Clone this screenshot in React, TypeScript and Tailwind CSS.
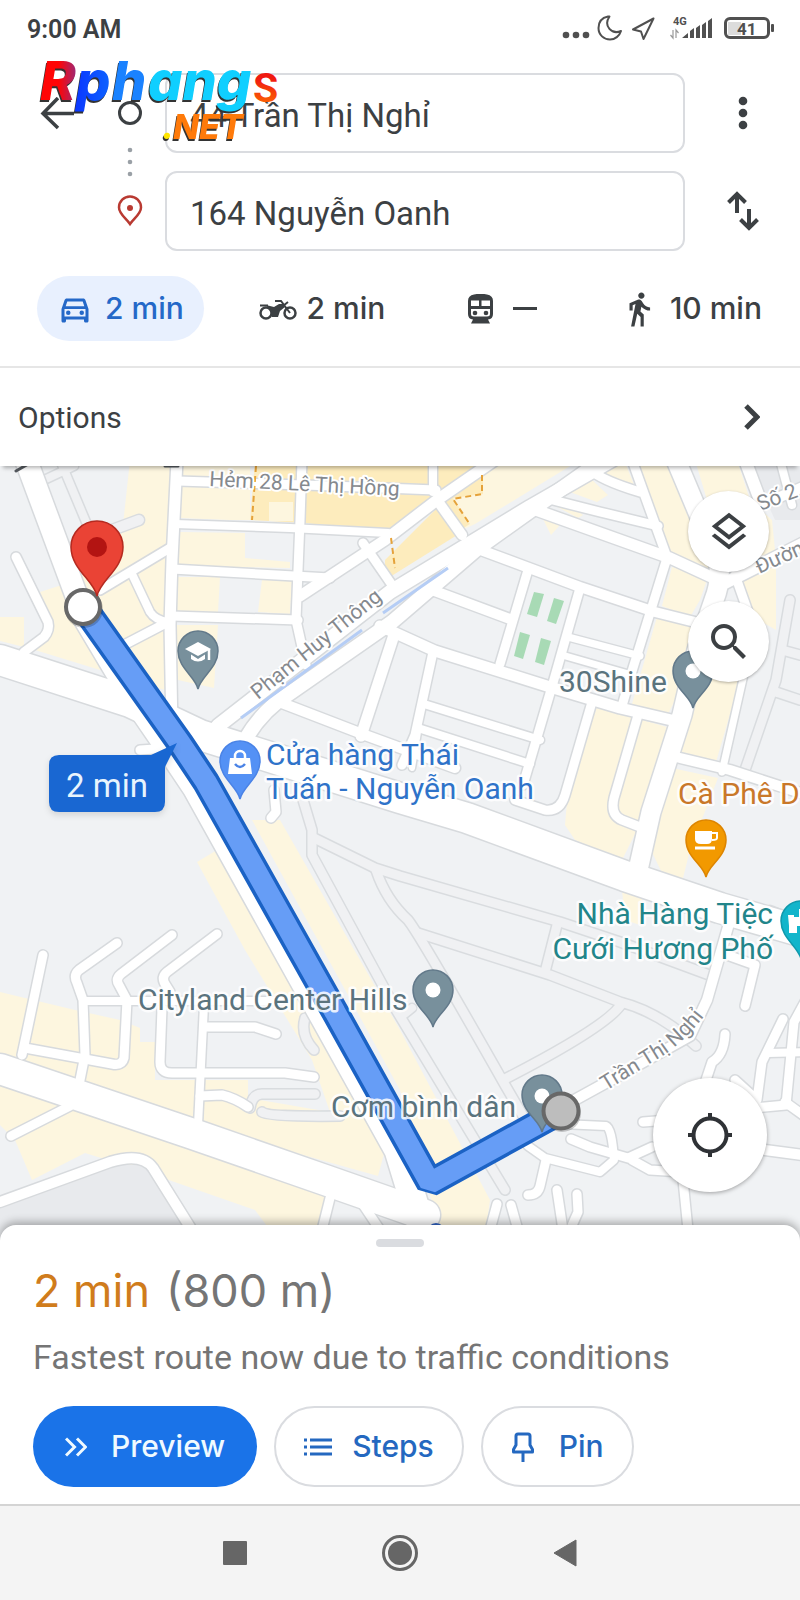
import React from "react";
import {
  MdDirectionsWalk,
  MdOutlineDirectionsCar,
  MdOutlineLayers,
  MdSearch,
} from "react-icons/md";

type Road = [d: string, width: number];

const LAND: [points: string, fill: string][] = [
  ["40,592 52,625 35,650 165,690 165,560 172,460 130,460 123,525 108,560 68,583", "#fdf6df"],
  ["0,617 24,617 24,647 0,641", "#fdf6df"],
  ["180,460 250,460 250,520 230,520 230,487 180,485", "#fdf6df"],
  ["180,485 230,485 230,520 180,518", "#fdf6df"],
  ["180,532 245,533 245,558 290,562 290,568 178,566", "#fdf6df"],
  ["178,577 220,577 218,612 176,612", "#fdf6df"],
  ["262,580 292,580 290,614 258,612", "#fdf6df"],
  ["176,625 218,625 214,688 178,680", "#fdf6df"],
  ["255,460 490,460 437,497 385,532 305,523 250,520", "#fdecbd"],
  ["269,502 293,502 293,521 269,521", "#fdf6df"],
  ["385,560 437,508 462,532 385,580", "#fdecbd"],
  ["437,508 485,460 580,460 475,524 462,530", "#fdf6df"],
  ["440,505 483,475 483,494 453,498 470,524 460,530", "#fdecbd"],
  ["570,492 590,478 608,495 597,502", "#fdf6df"],
  ["596,472 625,462 634,485", "#fdf6df"],
  ["550,503 565,501 583,515 578,518", "#fdf6df"],
  ["543,519 561,524 551,535", "#fdf6df"],
  ["635,460 675,460 730,560 705,575 672,562", "#fdf6df"],
  ["695,460 737,460 750,500 772,520 776,560 776,630 750,615 725,560", "#fdf6df"],
  ["672,567 708,577 700,600 690,617 662,606", "#fdf6df"],
  ["657,617 700,628 700,650 667,716 632,704", "#fdf6df"],
  ["697,672 740,680 716,762 677,752", "#fdf6df"],
  ["597,707 667,727 637,830 622,860 575,840 565,825 568,790", "#fdf6df"],
  ["672,768 718,778 690,850 682,882 662,873 651,850 652,830", "#fdf6df"],
  ["622,890 642,898 640,925 625,920", "#fdf6df"],
  ["252,820 280,820 400,1030 490,1200 486,1230 440,1230 400,1090", "#fdf6df"],
  ["197,862 217,850 385,1150 378,1176 200,1126 0,1064 0,992 75,1010 120,1020 140,1028 140,1042 155,1042 155,1080 248,1080 248,1098 330,1112 312,1060 245,950", "#fdf6df"],
  ["0,1080 65,1105 330,1195 318,1230 270,1230 255,1210 140,1170 85,1153 32,1180 15,1140 0,1125", "#fdf6df"],
  ["0,1205 120,1165 148,1165 196,1250 0,1250", "#e8eaed"],
  ["748,460 800,460 800,520 775,520", "#e8eaed"],
];

const FIELDS = [
  "534,592 544,594 537,617 527,614",
  "554,598 564,601 556,624 547,621",
  "520,632 530,635 523,659 514,656",
  "541,638 551,641 544,665 535,662",
];

const LANES: Road[] = [
  ["M60 460L86 522", 8],
  ["M44 480L74 466", 8],
  ["M112 530L139 520", 10],
  ["M300 790L312 830L312 855L395 1008L505 1190", 9],
  ["M314 838L375 868L400 876L560 922L620 942L712 976", 9],
  ["M376 870Q386 900 408 920Q420 935 505 1085L530 1128", 9],
  ["M418 933L550 975L620 1002Q660 1012 696 1046", 9],
  ["M557 925L545 972", 9],
  ["M622 1003Q610 1025 503 1080", 9],
  ["M402 1016L412 1008", 8],
  ["M305 1018Q300 1035 314 1050", 9],
  ["M250 1108Q252 1094 262 1094L315 1094", 9],
  ["M262 1112Q268 1117 340 1116", 9],
  ["M790 600L776 680L745 770", 9],
  ["M800 655L782 650", 9],
  ["M800 700L776 692", 9],
  ["M770 910L800 922", 8],
];

const ROADS: Road[] = [
  ["M16 557L48 622Q50 630 44 637L24 652", 9],
  ["M177 460L172 560L170 625L172 730", 11],
  ["M178 481L305 485L436 490", 9],
  ["M175 524L290 528L388 533", 8],
  ["M172 569L330 578", 9],
  ["M172 616L298 620", 9],
  ["M302 460L300 520L296 620L306 665", 9],
  ["M100 590L170 548", 9],
  ["M120 647L170 621", 9],
  ["M132 574L150 612Q155 620 168 622", 8],
  ["M300 596L385 540L437 500L495 460", 11],
  ["M363 543L392 585", 9],
  ["M437 500L462 535", 10],
  ["M433 460L433 492", 8],
  ["M140 750L170 748", 9],
  ["M218 726L390 592L530 507L612 460", 14],
  ["M245 740Q262 710 290 693L392 622L477 549L540 504L602 460", 14],
  ["M533 509L670 558L722 582", 11],
  ["M545 498L600 512L658 526", 9],
  ["M588 468Q600 480 640 492", 9],
  ["M632 460L668 560", 9],
  ["M745 460L760 500", 12],
  ["M780 460L792 505", 8],
  ["M745 512L810 484", 10],
  ["M725 583L810 540", 12],
  ["M735 575L758 640", 9],
  ["M745 670L722 772", 7],
  ["M478 549L580 587L655 612L695 622", 10],
  ["M432 590L510 619", 10],
  ["M528 570L500 664", 9],
  ["M580 588L553 683L523 785", 9],
  ["M667 558L650 613L633 668L622 706", 9],
  ["M380 626L435 651L550 687L620 708L680 722", 11],
  ["M433 652L415 735L402 765", 9],
  ["M424 704L540 740", 8],
  ["M418 728L530 764", 8],
  ["M418 732L412 768", 6],
  ["M592 702L565 795Q560 812 545 810L515 800", 9],
  ["M568 637L640 656", 7],
  ["M562 655L632 675", 7],
  ["M638 715L614 798Q610 815 622 820L640 827", 9],
  ["M676 757L730 770L810 796", 10],
  ["M274 700L365 735L455 768", 10],
  ["M393 638L361 736", 11],
  ["M274 790L276 812L271 818", 9],
  ["M560 1108L620 1075L690 1036L707 1000L730 920", 10],
  ["M727 955L755 965L745 1006", 9],
  ["M725 1034Q724 1055 712 1062L706 1080", 9],
  ["M783 1019L762 1062L757 1100L735 1080", 9],
  ["M806 1000L794 1022L786 1105L755 1108", 9],
  ["M768 1053L810 1052", 8],
  ["M785 1102L810 1120", 9],
  ["M765 1150L810 1156", 10],
  ["M643 1122L668 1120", 9],
  ["M562 1124L606 1126Q612 1128 614 1160L600 1172L545 1158L528 1146", 8],
  ["M571 1139L590 1147L628 1158L652 1147", 9],
  ["M632 1160L650 1170L682 1172", 9],
  ["M546 1160L540 1186Q538 1195 528 1195", 9],
  ["M682 1170L688 1230", 9],
  ["M497 1204L490 1230", 9],
  ["M511 1205L518 1230", 9],
  ["M557 1190L563 1230", 9],
  ["M577 1194L578 1212L570 1230", 9],
  ["M43 955L22 1055", 9],
  ["M117 943L79 970Q73 975 77 983L83 1000L85 1055L80 1080", 9],
  ["M172 935L121 974Q115 979 119 985L127 1000L124 1058Q122 1066 112 1064L25 1048", 9],
  ["M217 934L167 972Q161 977 165 984L170 992", 9],
  ["M162 1008L160 1062Q160 1073 172 1073L285 1073L314 1077", 9],
  ["M83 1001L204 1001L280 1001", 8],
  ["M204 1005L198 1125", 8],
  ["M204 1027L255 1027L276 1034", 9],
  ["M200 1096L222 1095Q235 1098 248 1107", 9],
  ["M70 1106L11 1136", 9],
  ["M0 1202L110 1162Q142 1152 153 1168L198 1240", 10],
  ["M330 1198L322 1230", 9],
  ["M360 1200L380 1230", 9],
  ["M676 460L718 560Q722 580 714 600L697 650L682 715L651 812L638 870", 19],
  ["M0 660L130 702L200 735L400 798L467 818L625 876L720 908L810 934", 30],
  ["M0 1069L190 1133L325 1180L425 1215", 30],
  ["M26 460L78 600", 22],
  ["M80 606L130 690L180 763L196 787L324 1017L398 1150L424 1235", 27],
];

const ROUTE = "M90 616L180 743L206 782L335 1012L430 1183L561 1111";

function Pin({ x, y, r, tail, fill, edge, children }: { x: number; y: number; r: number; tail: number; fill: string; edge: string; children?: React.ReactNode }) {
  const d = `M0 ${tail}C${-r * 0.12} ${tail * 0.68} ${-r} ${r * 0.85} ${-r} 0A${r} ${r} 0 1 1 ${r} 0C${r} ${r * 0.85} ${r * 0.12} ${tail * 0.68} 0 ${tail}Z`;
  return (
    <g transform={`translate(${x} ${y})`}>
      <path d={d} fill={fill} stroke={edge} strokeWidth="1.5" />
      {children}
    </g>
  );
}

function MapCanvas() {
  return (
    <svg className="absolute inset-0 size-full" viewBox="0 466 800 775" preserveAspectRatio="xMidYMid slice" role="img" aria-label="Route map">
      <defs>
        <path id="tran-thi-nghi" d="M606 1091L664 1055Q690 1038 716 1000" />
      </defs>
      <rect y="440" width="800" height="820" fill="#f0f2f4" />
      {LAND.map(([points, fill]) => (
        <polygon key={points} points={points} fill={fill} />
      ))}
      {FIELDS.map((points) => (
        <polygon key={points} points={points} fill="#a8dab5" />
      ))}
      <g fill="none" strokeLinecap="round" strokeLinejoin="round">
        {LANES.map(([d, w]) => (
          <path key={d} d={d} strokeWidth={w + 3} stroke="#d9dcdf" />
        ))}
        {LANES.map(([d, w]) => (
          <path key={d} d={d} strokeWidth={w} stroke="#f0f1f3" />
        ))}
        {ROADS.map(([d, w]) => (
          <path key={d} d={d} strokeWidth={w + 3} stroke="#d7dadd" />
        ))}
        {ROADS.map(([d, w]) => (
          <path key={d} d={d} strokeWidth={w} stroke="#ffffff" />
        ))}
        <path d="M241 718L362 630M383 613L448 568" stroke="#b5cdf5" strokeWidth="3" strokeLinecap="butt" />
        <path d="M256 466L252 520M391 538L395 568M482 475L482 494L453 499L469 523" stroke="#e5a23a" strokeWidth="2" strokeDasharray="6 4" strokeLinecap="butt" />
        <path d="M16 471L30 463M165 466L178 466" stroke="#555a5f" strokeWidth="3" />
      </g>

      <g fill="#85898e" stroke="#ffffff" strokeWidth="4" strokeLinejoin="round" paintOrder="stroke" fontSize="21">
        <text transform="translate(209 486) rotate(3)">Hẻm 28 Lê Thị Hồng</text>
        <text transform="translate(258 700) rotate(-39)">Phạm Huy Thông</text>
        <text>
          <textPath href="#tran-thi-nghi">Trần Thị Nghỉ</textPath>
        </text>
        <text transform="translate(760 511) rotate(-20)">Số 2</text>
        <text transform="translate(759 574) rotate(-24)">Đường</text>
      </g>

      <Pin x={433} y={990} r={20} tail={37} fill="#78909c" edge="#62798a">
        <circle r="7.5" fill="#fff" />
      </Pin>

      <g fill="none" strokeLinejoin="bevel">
        <path d={ROUTE} stroke="#1b62c4" strokeWidth="28" />
        <path d={ROUTE} stroke="#669df6" strokeWidth="21" />
      </g>

      <Pin x={542} y={1095} r={20} tail={37} fill="#78909c" edge="#62798a">
        <circle cy="1" r="7.5" fill="#fff" />
      </Pin>
      <circle cx="562" cy="1113" r="19" fill="#000" opacity=".2" />
      <circle cx="561" cy="1111" r="17.5" fill="#bdbdbd" stroke="#686868" strokeWidth="4" />

      <circle cx="84" cy="609" r="19" fill="#000" opacity=".2" />
      <circle cx="83" cy="607" r="17" fill="#fff" stroke="#686868" strokeWidth="4" />
      <Pin x={97} y={547} r={26} tail={49} fill="#ea4335" edge="#b52a20">
        <circle r="10" fill="#b31412" />
      </Pin>

      <Pin x={198} y={651} r={20} tail={38} fill="#78909c" edge="#62798a">
        <path d="M-13 -2L0 -9L13 -2L0 5Z" fill="#fff" />
        <path d="M-7 3.500V8Q0 13 7 8V3.500L0 8Z" fill="#fff" />
        <path d="M11 -2V9" stroke="#fff" strokeWidth="2.500" />
      </Pin>
      <Pin x={240} y={761} r={20} tail={38} fill="#5491f5" edge="#4a83e6">
        <path d="M-10 -3H10L12 13H-12Z" fill="#fff" />
        <path d="M-5 -3V-5A5 5 0 0 1 5 -5V-3" fill="none" stroke="#fff" strokeWidth="2.500" />
        <path d="M-5 3Q0 9 5 3" fill="none" stroke="#4a83e6" strokeWidth="2.500" />
      </Pin>
      <Pin x={693} y={671} r={20} tail={37} fill="#78909c" edge="#62798a">
        <circle r="7.5" fill="#fff" />
      </Pin>
      <Pin x={706} y={840} r={20} tail={37} fill="#f29900" edge="#dd8500">
        <path d="M-11 -9H6V-1Q6 4 1 4H-5Q-11 4 -11 -1Z" fill="#fff" />
        <path d="M6 -7H11V-2Q11 0 6 0" fill="none" stroke="#fff" strokeWidth="2" />
        <path d="M-11 8H9" stroke="#fff" strokeWidth="3" />
      </Pin>
      <Pin x={801} y={921} r={20} tail={38} fill="#12b5cb" edge="#1099ac">
        <path d="M-13 -6H-7V-4H-2V-12H4V-4H10V-6H13V5H11V12H-12V5Z" fill="#fff" />
        <path d="M-4 12V5H4V12Z" fill="#12b5cb" />
      </Pin>

      <path d="M59 755H151L177 743L165 767V802Q165 812 155 812H59Q49 812 49 802V765Q49 755 59 755Z" fill="#1967d2" className="drop-shadow-md" />
      <text x="66" y="797" fontSize="33" fill="#e8f4fd">2 min</text>

      <g stroke="#ffffff" strokeWidth="5" strokeOpacity=".85" strokeLinejoin="round" paintOrder="stroke" fontSize="30">
        <g fill="#2f73c9">
          <text x="266" y="765">Cửa hàng Thái</text>
          <text x="266" y="799">Tuấn - Nguyễn Oanh</text>
        </g>
        <g fill="#5a737d">
          <text x="559" y="692">30Shine</text>
          <text x="138" y="1010">Cityland Center Hills</text>
          <text x="331" y="1117">Cơm bình dân</text>
        </g>
        <g fill="#22858a" textAnchor="end">
          <text x="773" y="924">Nhà Hàng Tiệc</text>
          <text x="773" y="959">Cưới Hương Phố</text>
        </g>
        <text x="678" y="804" fill="#c9782a">Cà Phê D</text>
      </g>
      <circle cx="436" cy="1232" r="9" fill="#3367c8" />
    </svg>
  );
}

function StatusIcons() {
  return (
    <svg className="h-8 w-[216px]" viewBox="560 12 216 32" fill="#505050" role="img" aria-label="Battery 41 percent, 4G">
      <circle cx="566" cy="35" r="3.3" />
      <circle cx="576" cy="35" r="3.3" />
      <circle cx="586" cy="35" r="3.3" />
      <path d="M608 16.500C601 18 598.500 23 598.500 28C598.500 35 604 39.500 610 39.500C615 39.500 619.500 36 621 31C612 35 603 26 609.500 16.500Z" fill="none" stroke="#505050" strokeWidth="2" strokeLinejoin="round" />
      <path d="M653.500 18.500L633 29.500L641 31.500L643.500 39Z" fill="none" stroke="#505050" strokeWidth="2" strokeLinejoin="round" />
      <text x="673" y="24.500" fontSize="11" fontWeight="700">4G</text>
      <path d="M673 30V38L670.500 35M676 38V30L678.500 33" fill="none" stroke="#999" strokeWidth="1.200" />
      <path d="M682 38L688 33V38ZM690 38V31L694 28V38ZM696 38V28L700 25V38ZM702 38V25L706 22V38ZM708 38V21L712 18V38Z" />
      <rect x="728" y="22" width="13" height="13" fill="#dcdcdc" />
      <rect x="725.500" y="18.500" width="43" height="19" rx="4.500" fill="none" stroke="#505050" strokeWidth="3" />
      <rect x="771" y="24" width="3" height="8" rx="1" />
      <text x="737" y="34.500" fontSize="17" fontWeight="700">41</text>
    </svg>
  );
}

function Watermark() {
  return (
    <svg className="pointer-events-none absolute left-9 top-[54px] z-20 h-24 w-[260px]" viewBox="36 54 260 96" role="img" aria-label="Rphangs.NET">
      <defs>
        <linearGradient id="logo-r">
          <stop offset=".5" stopColor="#ff0505" />
          <stop offset="1" stopColor="#9a2a7a" />
        </linearGradient>
        <linearGradient id="logo-p">
          <stop offset="0" stopColor="#0a35ff" />
          <stop offset="1" stopColor="#0d63ff" />
        </linearGradient>
        <linearGradient id="logo-s" x2="0" y2="1">
          <stop offset=".3" stopColor="#f01a10" />
          <stop offset="1" stopColor="#ff7a00" />
        </linearGradient>
      </defs>
      <g className="font-[Inter] font-extrabold italic [filter:drop-shadow(-1px_2px_0_#333)]">
        <text x="40" y="100" fontSize="54" fill="url(#logo-r)">R</text>
        <text x="76" y="100" fontSize="54" fill="url(#logo-p)">p</text>
        <text x="112" y="100" fontSize="54" fill="#1a82ff">h</text>
        <text x="148" y="100" fontSize="54" fill="#10cfff">
          ang
        </text>
        <text x="162" y="139" fontSize="34" fill="#ffe500">.</text>
        <text x="173" y="139" fontSize="34" fill="#ff7a0a">NET</text>
      </g>
      <text x="253" y="102" fontSize="41" fontWeight="700" fill="url(#logo-s)">S</text>
    </svg>
  );
}

function MotorcycleIcon() {
  return (
    <svg className="h-6 w-[38px]" viewBox="0 0 38 24" aria-hidden="true">
      <g fill="none" stroke="currentColor">
        <circle cx="7" cy="16" r="5.500" strokeWidth="2.500" />
        <circle cx="31" cy="16" r="5.500" strokeWidth="2.500" />
        <path d="M1 8.500H9M16 4H22L31 16M24 9L29 5" strokeWidth="2" />
      </g>
      <path d="M7 8L15 10L20 7H24L26 10L21 14L19 20H13L12 15Z" fill="currentColor" />
    </svg>
  );
}

function TrainIcon() {
  return (
    <svg className="h-[30px] w-[25px]" viewBox="0 0 25 30" fill="currentColor" fillRule="evenodd" aria-hidden="true">
      <path d="M6 0.500Q12.500 -1 19 0.500Q25 1.500 25 7V20Q25 25 20 25.500L22 29.500H3L5 25.500Q0 25 0 20V7Q0 1.500 6 0.500ZM3 6.500V12H11V6.500ZM13.500 6.500V12H22V6.500ZM3 15V20Q3 22.500 6 22.500H19Q22 22.500 22 20V15Z" />
      <circle cx="7" cy="19" r="2.300" />
      <circle cx="18" cy="19" r="2.300" />
    </svg>
  );
}

const TAB = "flex h-[65px] items-center rounded-full text-[30px] font-medium";

export default function App() {
  return (
    <div className="relative flex min-h-screen flex-col bg-white font-[Roboto,sans-serif] text-[#3c4043]">
      <div className="flex h-14 items-center justify-between pl-[27px] pr-6">
        <span className="pt-1 text-[25px] font-semibold">9:00 AM</span>
        <StatusIcons />
      </div>

      <header className="relative z-10 shadow-[0_5px_4px_-3px_rgba(0,0,0,0.3)]">
        <div className="flex pt-[17px]">
          <div className="flex w-[104px] pl-10 pt-6">
            <button type="button" aria-label="Back" className="size-9">
              <svg viewBox="0 0 36 36" className="size-9" fill="none" stroke="currentColor" strokeWidth="3.500">
                <path d="M34 16.500H3M18 1L3 16.500L18 31" />
              </svg>
            </button>
          </div>
          <svg className="h-[178px] w-[52px]" viewBox="0 0 52 178" fill="none" aria-hidden="true">
            <circle cx="26" cy="40" r="10.500" stroke="#3c4043" strokeWidth="3" />
            <g fill="#9aa0a6">
              <circle cx="26" cy="77" r="2.300" />
              <circle cx="26" cy="89" r="2.300" />
              <circle cx="26" cy="101" r="2.300" />
            </g>
            <path d="M26 151C22 145 15 141 15 134.500A11 11 0 0 1 37 134.500C37 141 30 145 26 151Z" stroke="#b93a32" strokeWidth="2.500" />
            <circle cx="26" cy="135" r="3" fill="#b93a32" />
          </svg>
          <div className="ml-[9px] flex min-w-0 flex-1 flex-col gap-[18px]">
            <input aria-label="Starting point" defaultValue="44 Trần Thị Nghỉ" className="h-20 w-full rounded-xl border-2 border-[#dadce0] bg-white px-[23px] pt-1 text-[33px] outline-none" />
            <input aria-label="Destination" defaultValue="164 Nguyễn Oanh" className="h-20 w-full rounded-xl border-2 border-[#dadce0] bg-white px-[23px] pt-1 text-[33px] outline-none" />
          </div>
          <div className="flex w-[115px] flex-col items-center gap-[18px]">
            <button type="button" aria-label="More" className="flex h-20 w-12 items-center justify-center">
              <svg viewBox="0 0 10 34" className="h-[34px] w-[10px]" fill="currentColor">
                <circle cx="5" cy="5" r="4.300" />
                <circle cx="5" cy="17" r="4.300" />
                <circle cx="5" cy="29" r="4.300" />
              </svg>
            </button>
            <button type="button" aria-label="Swap start and destination" className="flex h-20 w-12 items-center justify-center">
              <svg viewBox="0 0 32 40" className="h-10 w-8" fill="none" stroke="currentColor" strokeWidth="4">
                <path d="M10 22V3M1.500 11.500L10 3L18.500 11.500M22 18V37M13.500 28.500L22 37L30.500 28.500" />
              </svg>
            </button>
          </div>
        </div>

        <nav aria-label="Travel mode" className="mt-[25px] flex justify-between border-b-2 border-[#e6e6e6] pb-[25px] pl-[37px] pr-[18px] font-[Inter,sans-serif]">
          <button type="button" className={`${TAB} gap-3 bg-[#e8f0fe] px-5 text-[#2468c8]`}>
            <MdOutlineDirectionsCar size={36} />
            2 min
          </button>
          <button type="button" className={`${TAB} gap-2.5 px-5`}>
            <MotorcycleIcon />
            2 min
          </button>
          <button type="button" className={`${TAB} gap-5 px-7`} aria-label="Transit, unavailable">
            <TrainIcon />
            <span className="h-[3px] w-6 bg-current" />
          </button>
          <button type="button" className={`${TAB} gap-3 px-5`}>
            <MdDirectionsWalk size={38} />
            10 min
          </button>
        </nav>

        <button type="button" className="flex h-[98px] w-full items-center justify-between bg-white pl-[18px] pr-10 text-[30px]">
          Options
          <svg viewBox="0 0 16 26" className="h-[26px] w-4" fill="none" stroke="currentColor" strokeWidth="5">
            <path d="M2 2L13 13L2 24" />
          </svg>
        </button>
      </header>

      <main className="relative min-h-[500px] flex-1 overflow-hidden">
        <MapCanvas />
        <button type="button" aria-label="Map layers" className="absolute right-[31px] top-[25px] flex size-[81px] items-center justify-center rounded-full bg-white shadow-[0_1px_3px_rgba(0,0,0,0.3)]">
          <MdOutlineLayers size={46} />
        </button>
        <button type="button" aria-label="Search along route" className="absolute right-[31px] top-[135px] flex size-[81px] items-center justify-center rounded-full bg-white shadow-[0_1px_3px_rgba(0,0,0,0.3)]">
          <MdSearch size={48} />
        </button>
        <button type="button" aria-label="Your location" className="absolute bottom-[49px] right-[33px] flex size-[114px] items-center justify-center rounded-full bg-white shadow-[0_1px_4px_rgba(0,0,0,0.35)]">
          <svg viewBox="0 0 46 46" className="size-[46px]" fill="none" stroke="#2f3236" strokeWidth="4">
            <circle cx="23" cy="23" r="16.500" />
            <path d="M23 1V8M23 38V45M1 23H8M38 23H45" />
          </svg>
        </button>
      </main>

      <section aria-label="Route summary" className="relative z-10 -mt-4 rounded-t-2xl bg-white px-[33px] pb-[17px] pt-[14px] shadow-[0_-3px_8px_rgba(0,0,0,0.3)]">
        <div className="mx-auto h-2 w-12 rounded-full bg-[#dadce0]" />
        <h1 className="mt-[18px] flex gap-4 font-[Inter,sans-serif] text-[45px] leading-[52px] text-[#757575]">
          <span className="text-[#d07c1c]">2 min</span>
          <span>(800 m)</span>
        </h1>
        <p className="mt-5 text-[34px] leading-10 text-[#757575]">Fastest route now due to traffic conditions</p>
        <div className="mt-[29px] flex gap-[17px] font-[Inter,sans-serif] text-[30px] font-medium text-[#2468c0]">
          <button type="button" className="flex h-[81px] items-center gap-6 rounded-full bg-[#1a73e8] px-8 text-[#f0faff]">
            <svg viewBox="0 0 22 20" className="h-5 w-[22px]" fill="none" stroke="currentColor" strokeWidth="3">
              <path d="M1 1.500L9.500 10L1 18.500M12 1.500L20.500 10L12 18.500" />
            </svg>
            Preview
          </button>
          <button type="button" className="flex h-[81px] items-center gap-5 rounded-full border-2 border-[#dadce0] px-7">
            <svg viewBox="0 0 28 18" className="h-[18px] w-7" fill="none" stroke="currentColor" strokeWidth="3">
              <path d="M0 2H3M6 2H28M0 9H3M6 9H28M0 16H3M6 16H28" />
            </svg>
            Steps
          </button>
          <button type="button" className="flex h-[81px] items-center gap-6 rounded-full border-2 border-[#dadce0] px-7">
            <svg viewBox="0 0 24 32" className="h-8 w-6" fill="none" stroke="currentColor" strokeWidth="3" strokeLinejoin="round">
              <path d="M7 3H17Q19 3 19 5V14L21.500 18.500V21H2.500V18.500L5 14V5Q5 3 7 3ZM12 21V31" />
            </svg>
            Pin
          </button>
        </div>
      </section>

      <nav aria-label="System" className="relative z-10 flex h-24 items-center justify-center gap-[129px] border-t-2 border-[#d4d4d4] bg-[#f4f4f4] text-[#666]">
        <button type="button" aria-label="Recent apps" className="flex w-9 justify-center">
          <span className="size-6 rounded-[1px] bg-current" />
        </button>
        <button type="button" aria-label="Home" className="size-9 rounded-full border-[3px] border-current p-[3px]">
          <span className="block size-full rounded-full bg-current" />
        </button>
        <button type="button" aria-label="Go back" className="flex w-9 justify-center">
          <svg viewBox="0 0 24 28" className="h-7 w-6" fill="currentColor">
            <path d="M23 1V27L1 14Z" stroke="currentColor" strokeLinejoin="round" />
          </svg>
        </button>
      </nav>

      <Watermark />
    </div>
  );
}
